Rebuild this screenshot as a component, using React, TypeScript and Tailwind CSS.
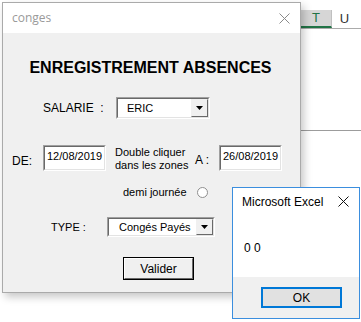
import React from 'react';

// sunken 3D frame used by VBA textboxes and combos
const Sunken: React.FC<{ className?: string; children?: React.ReactNode }> = ({ className = '', children }) => (
  <div className={`border border-t-[#a0a0a0] border-l-[#a0a0a0] border-b-white border-r-white ${className}`}>
    <div className="w-full h-full border border-t-[#696969] border-l-[#696969] border-b-[#e3e3e3] border-r-[#e3e3e3] bg-white flex">
      {children}
    </div>
  </div>
);

const DropButton: React.FC = () => (
  <div className="ml-auto shrink-0 w-[17px] h-full bg-[#f0f0f0] border border-t-[#f0f0f0] border-l-[#f0f0f0] border-b-[#696969] border-r-[#696969] flex items-center justify-center">
    <svg width="7" height="4" viewBox="0 0 7 4">
      <polygon points="0,0 7,0 3.5,4" fill="#000" />
    </svg>
  </div>
);

const Combo: React.FC<{ value: string; width: string; height: string; pad: string }> = ({ value, width, height, pad }) => (
  <Sunken className={`${width} ${height}`}>
    <span className={`${pad} self-center whitespace-nowrap`}>{value}</span>
    <DropButton />
  </Sunken>
);

const TextBox: React.FC<{ value: string }> = ({ value }) => (
  <Sunken className="w-[63px] h-[26px]">
    <span className="pl-[2px] pt-[2px] leading-[14px] whitespace-nowrap">{value}</span>
  </Sunken>
);

const CloseX: React.FC<{ color: string }> = ({ color }) => (
  <svg width="11" height="11" viewBox="0 0 11 11">
    <path d="M0.5 0.5 L10.5 10.5 M10.5 0.5 L0.5 10.5" stroke={color} strokeWidth="1" />
  </svg>
);

export default function App() {
  return (
    <div className="relative w-[361px] h-[322px] overflow-hidden bg-white font-['Liberation_Sans',Arial,sans-serif] text-[11px] text-black">
      {/* Excel sheet behind */}
      <div className="h-[10px]" />
      <div className="flex h-[19px] ml-[301px] border-b border-[#ababab]">
        <div className="w-[31px] bg-[#d6d6d6] border-r border-[#c0c0c0] border-b-2 border-b-[#217346] flex items-center justify-center text-[13px] text-[#217346]">
          T
        </div>
        <div className="flex-1 flex items-center justify-center text-[13px] text-[#333] pr-[4px]">U</div>
      </div>
      <div className="mt-[101px] ml-[300px] h-px bg-[#9c9c9c]" />

      {/* UserForm */}
      <div className="absolute left-[2px] top-[2px] w-[299px] h-[291px] border border-[#aaaaaa] bg-[#f0f0f0] shadow-[3px_4px_8px_rgba(0,0,0,0.22)] flex flex-col">
        <div className="h-[30px] bg-white flex items-center pl-[9px] pr-[10px]">
          <span className="text-[12px] text-[#9a9a9a] font-['Open_Sans',sans-serif]">conges</span>
          <div className="ml-auto">
            <CloseX color="#8a8a8a" />
          </div>
        </div>

        <div className="mt-[25px] h-[20px] leading-[20px] text-center font-bold text-[16px] pr-[2px]">
          ENREGISTREMENT ABSENCES
        </div>

        <div className="mt-[19px] flex items-center h-[22px] pl-[40px]">
          <span className="w-[73px] text-[12px]">SALARIE&nbsp; :</span>
          <Combo value="ERIC" width="w-[94px]" height="h-[22px]" pad="pl-[9px]" />
        </div>

        <div className="mt-[26px] flex items-start h-[26px] pl-[9px]">
          <span className="w-[31px] mt-[10px] leading-[13px] text-[12px]">DE:</span>
          <TextBox value="12/08/2019" />
          <div className="ml-[9px] w-[80px] leading-[13px] mt-[1px]">
            Double cliquer
            <br />
            dans les zones
          </div>
          <span className="w-[24px] mt-[9px] leading-[13px] text-[12px]">A :</span>
          <TextBox value="26/08/2019" />
        </div>

        <div className="mt-[16px] flex items-center h-[11px] pl-[120px]">
          <span className="w-[74px]">demi journée</span>
          <div className="w-[11px] h-[11px] rounded-full border border-[#8f8f8f] bg-white" />
        </div>

        <div className="mt-[19px] flex items-center h-[20px] pl-[48px]">
          <span className="w-[56px]">TYPE :</span>
          <Combo value="Congés Payés" width="w-[108px]" height="h-[20px]" pad="pl-[10px]" />
        </div>

        <div className="mt-[20px] ml-[120px] w-[71px] h-[23px] border border-black">
          <div className="w-full h-full border border-t-white border-l-white border-b-[#696969] border-r-[#696969] bg-[#f0f0f0] flex items-center justify-center text-[12px]">
            Valider
          </div>
        </div>
      </div>

      {/* MsgBox */}
      <div className="absolute left-[232px] top-[187px] w-[128px] h-[132px] border border-[#3b8ede] bg-[#f0f0f0] flex flex-col">
        <div className="h-[27px] bg-white flex items-center pl-[9px] pr-[10px]">
          <span className="text-[12px] text-black">Microsoft Excel</span>
          <div className="ml-auto">
            <CloseX color="#111" />
          </div>
        </div>
        <div className="h-[62px] bg-white pl-[11px] pt-[26px] text-[12px] leading-[14px]">0 0</div>
        <div className="pt-[10px] pl-[28px]">
          <div className="w-[81px] h-[21px] border-2 border-[#0078d7] bg-[#e1e1e1] flex items-center justify-center text-[12px]">
            OK
          </div>
        </div>
      </div>
    </div>
  );
}
